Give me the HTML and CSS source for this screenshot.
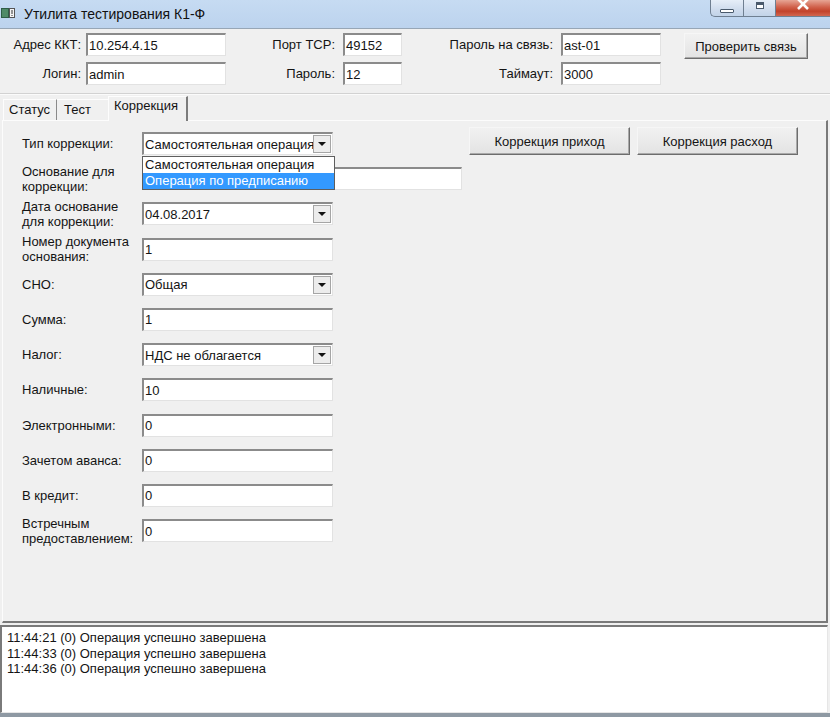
FILE: index.html
```html
<!DOCTYPE html>
<html lang="ru">
<head>
<meta charset="utf-8">
<title>Утилита тестирования К1-Ф</title>
<link rel="stylesheet" href="styles.css">
</head>
<body>
<div class="window">
  <div class="titlebar">
    <svg class="app-icon" width="14" height="12" viewBox="0 0 14 12">
      <rect x="0" y="1" width="8" height="10" fill="#2f5d46"/>
      <rect x="1" y="2" width="6" height="8" fill="#4f8a67"/>
      <rect x="8.5" y="1.5" width="5" height="9" fill="#f4f4f4" stroke="#555" stroke-width="1"/>
      <rect x="10.5" y="3" width="1" height="4" fill="#333"/>
      <rect x="10.5" y="8" width="1" height="1" fill="#333"/>
    </svg>
    <span class="title">Утилита тестирования К1-Ф</span>
    <div class="controls">
      <div class="ctl ctl-min"><span class="min-bar"></span></div>
      <div class="ctl ctl-max"><span class="max-box"></span></div>
      <div class="ctl ctl-close">
        <svg width="14" height="10" viewBox="0 0 14 10"><path d="M2 -1 L12 9 M12 -1 L2 9" stroke="#fff" stroke-width="2.6" fill="none"/></svg>
      </div>
    </div>
  </div>

  <div class="conn">
    <label class="lbl lbl-1">Адрес ККТ:</label>
    <div class="field">10.254.4.15</div>
    <label class="lbl">Порт TCP:</label>
    <div class="field">49152</div>
    <label class="lbl">Пароль на связь:</label>
    <div class="field">ast-01</div>
    <button class="btn btn-check">Проверить связь</button>

    <label class="lbl lbl-1">Логин:</label>
    <div class="field">admin</div>
    <label class="lbl">Пароль:</label>
    <div class="field">12</div>
    <label class="lbl">Таймаут:</label>
    <div class="field">3000</div>
  </div>

  <div class="tabs">
    <div class="tab tab-status">Статус</div>
    <div class="tab tab-test">Тест</div>
    <div class="tab tab-corr active">Коррекция</div>
  </div>

  <div class="panel">
    <div class="form">
      <div class="row">
        <div class="flabel">Тип коррекции:</div>
        <div class="combo-wrap">
          <div class="field combo"><span class="combo-text">Самостоятельная операция</span><span class="arrow"><i></i></span></div>
          <div class="dropdown">
            <div class="item">Самостоятельная операция</div>
            <div class="item selected">Операция по предписанию</div>
          </div>
        </div>
      </div>
      <div class="row">
        <div class="flabel">Основание для<br>коррекции:</div>
        <div class="field wide"></div>
      </div>
      <div class="row">
        <div class="flabel">Дата основание<br>для коррекции:</div>
        <div class="field combo"><span class="combo-text">04.08.2017</span><span class="arrow"><i></i></span></div>
      </div>
      <div class="row">
        <div class="flabel">Номер документа<br>основания:</div>
        <div class="field">1</div>
      </div>
      <div class="row">
        <div class="flabel">СНО:</div>
        <div class="field combo"><span class="combo-text">Общая</span><span class="arrow"><i></i></span></div>
      </div>
      <div class="row">
        <div class="flabel">Сумма:</div>
        <div class="field">1</div>
      </div>
      <div class="row">
        <div class="flabel">Налог:</div>
        <div class="field combo"><span class="combo-text">НДС не облагается</span><span class="arrow"><i></i></span></div>
      </div>
      <div class="row">
        <div class="flabel">Наличные:</div>
        <div class="field">10</div>
      </div>
      <div class="row">
        <div class="flabel">Электронными:</div>
        <div class="field">0</div>
      </div>
      <div class="row">
        <div class="flabel">Зачетом аванса:</div>
        <div class="field">0</div>
      </div>
      <div class="row">
        <div class="flabel">В кредит:</div>
        <div class="field">0</div>
      </div>
      <div class="row">
        <div class="flabel">Встречным<br>предоставлением:</div>
        <div class="field">0</div>
      </div>
    </div>
    <div class="actions">
      <button class="btn btn-corr">Коррекция приход</button>
      <button class="btn btn-corr">Коррекция расход</button>
    </div>
  </div>

  <div class="log">
    <div>11:44:21 (0) Операция успешно завершена</div>
    <div>11:44:33 (0) Операция успешно завершена</div>
    <div>11:44:36 (0) Операция успешно завершена</div>
  </div>
  <div class="frame-bottom"></div>
</div>
</body>
</html>
```

FILE: styles.css
```css
* { box-sizing: border-box; }
html, body { margin: 0; padding: 0; }
body {
  width: 830px;
  height: 717px;
  overflow: hidden;
  background: #f0f0f0;
  font-family: "Liberation Sans", Arial, sans-serif;
  font-size: 13px;
  color: #141414;
}
.window { width: 830px; height: 717px; display: flex; flex-direction: column; }

/* title bar */
.titlebar {
  height: 29px;
  flex: none;
  display: flex;
  align-items: flex-start;
  background: linear-gradient(#c6dbf2, #bcd3ee);
  border-bottom: 1px solid #97a6b6;
}
.app-icon { margin: 7px 0 0 1px; flex: none; }
.title { margin: 6px 0 0 9px; font-size: 14px; color: #111; line-height: 16px; }
.controls { margin-left: auto; display: flex; height: 17px; }
.ctl {
  height: 17px;
  display: flex;
  align-items: center;
  justify-content: center;
  border: 1px solid #6f7f91;
  border-top: none;
}
.ctl-min {
  width: 33px;
  border-bottom-left-radius: 5px;
  border-right: none;
  background: linear-gradient(#e6eef8, #cfdced 60%, #c2d3e8);
}
.ctl-max {
  width: 32px;
  border-right: none;
  background: linear-gradient(#e6eef8, #cfdced 60%, #c2d3e8);
}
.ctl-close {
  width: 55px;
  border-right: none;
  background: linear-gradient(#e7a595, #d0604a 45%, #c2422b 70%, #d2664f);
  align-items: flex-start;
}
.min-bar {
  width: 14px; height: 4px; margin-top: 6px;
  background: #fff; border: 1px solid #4a5a6c; border-radius: 1px;
}
.max-box {
  width: 8px; height: 7px; margin-top: -5px;
  border: 1px solid #4a5a6c; background: #fff;
  box-shadow: inset 0 2px 0 #4a5a6c;
}

/* connection form */
.conn {
  flex: none;
  height: 65px;
  display: grid;
  grid-template-columns: 86px 140px 117px 59px 159px 100px 124px;
  grid-template-rows: 23px 23px;
  row-gap: 6px;
  padding-top: 4px;
  border-bottom: 1px solid #d2d2d2;
  box-shadow: 0 1px 0 #fbfbfb;
}
.lbl { text-align: right; line-height: 23px; white-space: nowrap; padding-right: 8px; }
.lbl.lbl-1 { padding-right: 5px; }
.btn-check {
  grid-column: 7;
  grid-row: 1;
  align-self: start;
  height: 26px;
  margin-left: 23px;
  width: 124px;
}

.field {
  height: 23px;
  background: #fff;
  border-top: 2px solid #8b8b8b;
  border-left: 2px solid #8b8b8b;
  border-right: 1px solid #e2e2e2;
  border-bottom: 1px solid #e2e2e2;
  padding-left: 1px;
  display: flex;
  align-items: center;
  white-space: nowrap;
  overflow: hidden;
  color: #141414;
}

.btn {
  font-family: "Liberation Sans", Arial, sans-serif;
  font-size: 13px;
  color: #141414;
  background: linear-gradient(#f1f1f1, #e3e3e3);
  border: 1px solid;
  border-color: #f6f6f6 #6d6d6d #6d6d6d #f6f6f6;
  box-shadow: inset -1px -1px 0 #a9a9a9;
  padding: 0;
}

/* tabs */
.tabs {
  flex: none;
  height: 26px;
  display: flex;
  align-items: flex-end;
  padding-left: 3px;
  position: relative;
  z-index: 1;
}
.tab {
  height: 21px;
  line-height: 20px;
  border-left: 1px solid #fdfdfd;
  border-top: 1px solid #fdfdfd;
  padding-left: 5px;
}
.tab-status { width: 54px; border-right: 1px solid #8a8a8a; }
.tab-test { width: 51px; padding-left: 7px; border-left: none; }
.tab-corr { width: 80px; padding-left: 5px; }
.tab.active {
  height: 25px;
  margin-bottom: -1px;
  line-height: 18px;
  background: #f0f0f0;
  border-right: 2px solid #7c7c7c;
}

/* panel */
.panel {
  flex: none;
  height: 503px;
  margin: 0 2px 0 2px;
  display: flex;
  align-items: flex-start;
  border-top: 1px solid #fcfcfc;
  border-left: 1px solid #fcfcfc;
  border-right: 2px solid #7a7a7a;
  border-bottom: 2px solid #7a7a7a;
  padding-left: 19px;
}
.form { padding-top: 11px; width: 440px; }
.row {
  height: 23px;
  display: flex;
  align-items: center;
  margin-bottom: 12.2px;
}
.flabel { width: 120px; flex: none; line-height: 15px; }
.row .field { width: 191px; }
.row .field.wide { width: 320px; }
.combo-wrap { position: relative; }
.combo { justify-content: space-between; padding-left: 1px; padding-right: 1px; }
.combo-text { overflow: hidden; }
.arrow {
  flex: none;
  width: 18px;
  height: 18px;
  background: #ececec;
  border: 1px solid #a5a5a5;
  display: flex;
  align-items: center;
  justify-content: center;
}
.arrow i {
  width: 0; height: 0;
  border-left: 4px solid transparent;
  border-right: 4px solid transparent;
  border-top: 4px solid #111;
}
.dropdown {
  position: absolute;
  left: 0;
  top: 24px;
  width: 193px;
  background: #fff;
  border: 1px solid #5e5e5e;
  z-index: 5;
}
.item { height: 16px; line-height: 16px; padding-left: 2px; white-space: nowrap; }
.item.selected { background: #3399ff; color: #fff; }

.actions { display: flex; gap: 7px; padding-top: 6px; margin-left: 7px; }
.btn-corr { width: 161px; height: 28px; }

/* log */
.log {
  flex: none;
  height: 88px;
  margin: 2px 2px 0 0;
  background: #fff;
  border-top: 2px solid #7a7a7a;
  border-left: 2px solid #7a7a7a;
  border-right: 1px solid #e6e6e6;
  border-bottom: 1px solid #e6e6e6;
  padding: 3px 0 0 5px;
  line-height: 15.5px;
  font-size: 13px;
}
.frame-bottom { flex: none; height: 4px; background: #8e99a3; }
```
